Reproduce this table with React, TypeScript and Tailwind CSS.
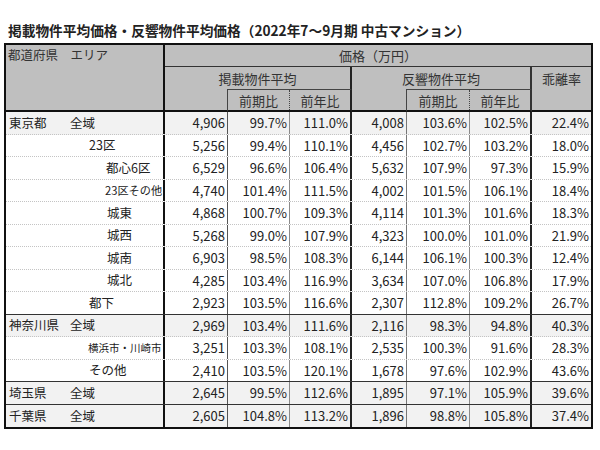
import React from "react";

type Row = {
  pref?: string;
  area: string;
  pad?: string;
  size?: string;
  vals: string[];
  shade?: boolean;
  last?: boolean;
  end?: boolean;
};

const rows: Row[] = [
  { pref: "東京都", area: "全域", vals: ["4,906", "99.7%", "111.0%", "4,008", "103.6%", "102.5%", "22.4%"], shade: true },
  { area: "23区", pad: "pl-[83px]", vals: ["5,256", "99.4%", "110.1%", "4,456", "102.7%", "103.2%", "18.0%"] },
  { area: "都心6区", pad: "pl-[100px]", vals: ["6,529", "96.6%", "106.4%", "5,632", "107.9%", "97.3%", "15.9%"] },
  { area: "23区その他", pad: "pl-[99px]", size: "text-[11.2px]", vals: ["4,740", "101.4%", "111.5%", "4,002", "101.5%", "106.1%", "18.4%"] },
  { area: "城東", pad: "pl-[101px]", vals: ["4,868", "100.7%", "109.3%", "4,114", "101.3%", "101.6%", "18.3%"] },
  { area: "城西", pad: "pl-[101px]", vals: ["5,268", "99.0%", "107.9%", "4,323", "100.0%", "101.0%", "21.9%"] },
  { area: "城南", pad: "pl-[101px]", vals: ["6,903", "98.5%", "108.3%", "6,144", "106.1%", "100.3%", "12.4%"] },
  { area: "城北", pad: "pl-[101px]", vals: ["4,285", "103.4%", "116.9%", "3,634", "107.0%", "106.8%", "17.9%"] },
  { area: "都下", pad: "pl-[83px]", vals: ["2,923", "103.5%", "116.6%", "2,307", "112.8%", "109.2%", "26.7%"], last: true },
  { pref: "神奈川県", area: "全域", vals: ["2,969", "103.4%", "111.6%", "2,116", "98.3%", "94.8%", "40.3%"], shade: true },
  { area: "横浜市・川崎市", pad: "pl-[82px]", size: "text-[10.5px]", vals: ["3,251", "103.3%", "108.1%", "2,535", "100.3%", "91.6%", "28.3%"] },
  { area: "その他", pad: "pl-[83px]", vals: ["2,410", "103.5%", "120.1%", "1,678", "97.6%", "102.9%", "43.6%"], last: true },
  { pref: "埼玉県", area: "全域", vals: ["2,645", "99.5%", "112.6%", "1,895", "97.1%", "105.9%", "39.6%"], shade: true, last: true },
  { pref: "千葉県", area: "全域", vals: ["2,605", "104.8%", "113.2%", "1,896", "98.8%", "105.8%", "37.4%"], shade: true, end: true },
];

// right border of each value column
const valBorders = [
  "border-r border-r-[#555]",
  "border-r border-r-[#8a8a8a]",
  "border-r-2 border-r-[#222]",
  "border-r border-r-[#777]",
  "border-r border-r-[#8a8a8a]",
  "border-r-2 border-r-[#222]",
  "",
];

const cols = "grid grid-cols-[159px_63px_62px_62px_55px_63px_62px_59px]";

const Header = () => (
  <div className={`${cols} grid-rows-[22px_22px_23px] bg-[#bfbfbf] text-[13px] text-[#333] leading-none`}>
    <div className="col-start-1 row-start-1 row-span-3 border-r-2 border-b-2 border-[#111] pl-[2px] pt-[4px] text-[12.5px]">
      都道府県　エリア
    </div>
    <div className="col-start-2 col-span-7 row-start-1 flex items-center justify-center border-b border-[#333]">
      価格（万円）
    </div>
    <div className="col-start-2 col-span-3 row-start-2 flex items-center justify-center border-r-2 border-[#222]">
      掲載物件平均
    </div>
    <div className="col-start-5 col-span-3 row-start-2 flex items-center justify-center border-r-2 border-[#333]">
      反響物件平均
    </div>
    <div className="col-start-8 row-start-2 row-span-2 flex justify-center border-b-2 border-[#111] pt-[5px]">
      乖離率
    </div>
    <div className="col-start-2 row-start-3 border-r border-b-2 border-r-[#444] border-b-[#111]" />
    <div className="col-start-3 row-start-3 flex border-t border-b-2 border-t-[#444] border-b-[#111]">
      <div className="flex flex-1 items-center justify-center border-r border-dotted border-[#444]">前期比</div>
    </div>
    <div className="col-start-4 row-start-3 flex items-center justify-center border-t border-r-2 border-b-2 border-t-[#444] border-r-[#222] border-b-[#111]">
      前年比
    </div>
    <div className="col-start-5 row-start-3 border-r border-b-2 border-r-[#444] border-b-[#111]" />
    <div className="col-start-6 row-start-3 flex border-t border-b-2 border-t-[#444] border-b-[#111]">
      <div className="flex flex-1 items-center justify-center border-r border-dotted border-[#444]">前期比</div>
    </div>
    <div className="col-start-7 row-start-3 flex items-center justify-center border-t border-r-2 border-b-2 border-t-[#444] border-r-[#333] border-b-[#111]">
      前年比
    </div>
  </div>
);

const DataRow = ({ r }: { r: Row }) => {
  const line = r.end
    ? ""
    : r.last
    ? "border-b border-[#333]"
    : "border-b border-dotted border-[#c4c4c4]";
  return (
    <div className={`${cols} h-[22.5px] ${line} ${r.shade ? "bg-[#f2f2f2]" : "bg-white"} text-[#222] leading-none`}>
      <div className={`flex items-center whitespace-nowrap border-r-2 border-r-[#111] ${r.pad ?? "pl-[3px]"} ${r.size ?? "text-[12.5px]"}`}>
        {r.pref && <span className="inline-block w-[61px]">{r.pref}</span>}
        {r.area}
      </div>
      {r.vals.map((v, i) => (
        <div key={i} className={`flex items-center justify-end pr-[2px] text-[13px] ${valBorders[i]}`}>
          {v}
        </div>
      ))}
    </div>
  );
};

export default function App() {
  return (
    <div className="w-[600px] h-[450px] bg-white pt-[22px] font-['Noto_Sans_CJK_JP',sans-serif]">
      <div className="pl-[8px] text-[13.7px] font-bold leading-[16px] text-[#222]">
        掲載物件平均価格・反響物件平均価格（2022年7～9月期 中古マンション）
      </div>
      <div className="ml-[4px] mt-[5px] w-[589px] border-2 border-[#111]">
        <Header />
        {rows.map((r, i) => (
          <DataRow key={i} r={r} />
        ))}
      </div>
    </div>
  );
}
